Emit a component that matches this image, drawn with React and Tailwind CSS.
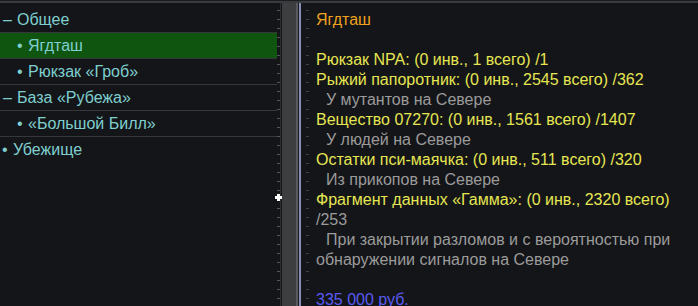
import React from "react";

const font = { fontFamily: '"Liberation Sans", Arial, sans-serif' };

function TreeRow({ children, selected, last }) {
  return (
    <div
      className={`h-[26px] flex items-center ${last ? "" : "border-b border-[#36373a]"} ${
        selected ? "bg-[#0f5510]" : ""
      }`}
    >
      {children}
    </div>
  );
}

export default function App() {
  return (
    <div
      className="w-[698px] h-[306px] bg-[#141518] overflow-hidden relative text-[16px] leading-[20px]"
      style={font}
    >
      <div className="h-[1px] bg-[#1c1d20]" />
      <div className="h-[2px] bg-[#3a3b3e]" />
      <div className="flex h-[303px]">
        {/* left tree */}
        <div className="w-[277px] pt-[4px] text-[#7fcfd0]">
          <TreeRow>
            <span className="w-[17px] pl-[3px]">–</span>
            <span>Общее</span>
          </TreeRow>
          <TreeRow selected>
            <span className="w-[28px] pl-[17px]">•</span>
            <span>Ягдташ</span>
          </TreeRow>
          <TreeRow>
            <span className="w-[28px] pl-[17px]">•</span>
            <span>Рюкзак «Гроб»</span>
          </TreeRow>
          <TreeRow>
            <span className="w-[17px] pl-[3px]">–</span>
            <span>База «Рубежа»</span>
          </TreeRow>
          <TreeRow>
            <span className="w-[28px] pl-[17px]">•</span>
            <span>«Большой Билл»</span>
          </TreeRow>
          <TreeRow last>
            <span className="w-[13px] pl-[2px]">•</span>
            <span>Убежище</span>
          </TreeRow>
        </div>
        {/* splitter */}
        <div className="w-[3px] bg-[repeating-linear-gradient(to_bottom,transparent_0px,transparent_7px,#55565a_7px,#55565a_8px,transparent_8px,transparent_9px)]" />
        <div className="w-[1px] bg-[#2e2f32]" />
        <div className="w-[1px]" />
        <div className="w-[14px] bg-[#3d3e40]" />
        <div className="w-[2px] bg-[#58595c]" />
        <div className="w-[1px] bg-[#1a1b1e]" />
        <div className="w-[2px] bg-[#8a8db4]" />
        <div className="w-[5px]" />
        <div className="w-[3px] bg-[repeating-linear-gradient(to_bottom,transparent_0px,transparent_7px,#3e3f43_7px,#3e3f43_8px,transparent_8px,transparent_9px)]" />
        {/* content */}
        <div className="flex-1 pl-[7px] pr-[20px] pt-[7px]">
          <div className="text-[#eea21f]">Ягдташ</div>
          <div className="h-[20px]" />
          <div className="text-[#e6e653]">Рюкзак NPA: (0 инв., 1 всего) /1</div>
          <div className="text-[#e6e653]">Рыжий папоротник: (0 инв., 2545 всего) /362</div>
          <div className="text-[#9b9b9b] pl-[10px]">У мутантов на Севере</div>
          <div className="text-[#e6e653]">Вещество 07270: (0 инв., 1561 всего) /1407</div>
          <div className="text-[#9b9b9b] pl-[10px]">У людей на Севере</div>
          <div className="text-[#e6e653]">Остатки пси-маячка: (0 инв., 511 всего) /320</div>
          <div className="text-[#9b9b9b] pl-[10px]">Из прикопов на Севере</div>
          <div>
            <span className="text-[#e6e653]">Фрагмент данных «Гамма»: (0 инв., 2320 всего)</span>{" "}
            <span className="text-[#9b9b9b]">/253</span>
          </div>
          <div className="text-[#9b9b9b] indent-[10px]">
            При закрытии разломов и с вероятностью при обнаружении сигналов на Севере
          </div>
          <div className="h-[20px]" />
          <div className="text-[#5a5af2]">335 000 руб.</div>
        </div>
      </div>
      {/* mouse cursor */}
      <div className="absolute left-[275px] top-[194px] w-[7px] h-[7px] pointer-events-none">
        <div className="absolute left-[2px] top-0 w-[3px] h-[7px] bg-white" />
        <div className="absolute left-0 top-[2px] w-[7px] h-[3px] bg-white" />
      </div>
    </div>
  );
}
